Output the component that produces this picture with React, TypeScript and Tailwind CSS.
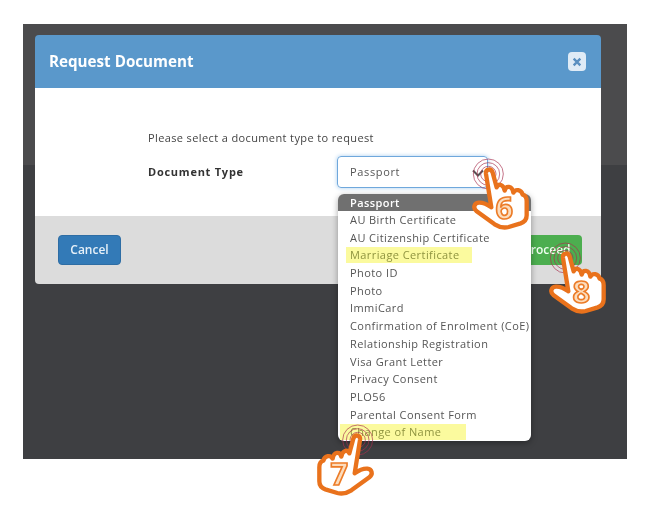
const options = [
  "AU Birth Certificate",
  "AU Citizenship Certificate",
  "Marriage Certificate",
  "Photo ID",
  "Photo",
  "ImmiCard",
  "Confirmation of Enrolment (CoE)",
  "Relationship Registration",
  "Visa Grant Letter",
  "Privacy Consent",
  "PLO56",
  "Parental Consent Form",
  "Change of Name",
];

const highlighted = ["Marriage Certificate", "Change of Name"];

function Hand({ n, className, mirror }: { n: string; className: string; mirror?: boolean }) {
  return (
    <svg viewBox="0 0 210 240" className={"absolute w-[70px] h-[80px] overflow-visible " + className}>
      <g transform={mirror ? "translate(210 0) scale(-1 1)" : undefined}>
        <g fill="none" stroke="#a8304e" strokeWidth="2.5" opacity="0.8">
          <circle cx="85" cy="72" r="45" />
          <circle cx="85" cy="72" r="34" />
          <circle cx="85" cy="72" r="23" />
        </g>
        <path
          d="M78 72 C76 56 94 54 98 68 L110 112 C116 100 130 102 134 122 C138 106 156 106 160 128 C166 116 184 118 188 134 C196 136 200 144 200 154 L200 196 C200 208 194 216 182 220 L146 231 C130 235 118 232 104 223 L50 184 C38 174 42 160 56 158 C68 157 80 162 94 172 Z"
          fill="#ffffff"
          stroke="#e9721c"
          strokeWidth="13"
          strokeLinejoin="round"
        />
      </g>
      <text
        x={mirror ? 70 : 133}
        y="208"
        textAnchor="middle"
        fontFamily="'Open Sans', sans-serif"
        fontWeight="700"
        fontSize="92"
        fill="#fcdcbc"
        stroke="#ec7c28"
        strokeWidth="5"
      >
        {n}
      </text>
    </svg>
  );
}

export default function App() {
  return (
    <div className="w-[670px] h-[513px] bg-white pt-[24px] pl-[23px] overflow-hidden font-['Open_Sans',sans-serif] blur-[0.5px]">
      <div className="relative w-[604px] h-[435px] p-[11px_12px] bg-[linear-gradient(#4b4b4d_0,#4b4b4d_141px,#3e3f42_141px)]">
        <div className="w-[566px] h-[249px] rounded-[4px] overflow-hidden flex flex-col">
          <div className="h-[53px] bg-[#5a98cb] flex items-center justify-between pl-[14px] pr-[15px]">
            <h1 className="text-[15.2px] font-bold text-white">Request Document</h1>
            <button className="w-[18px] h-[19px] rounded-[4px] bg-[#dfebf6] flex items-center justify-center">
              <svg viewBox="0 0 12 12" className="w-[10px] h-[10px]">
                <path d="M2 2 L10 10 M10 2 L2 10" stroke="#5a8fc0" strokeWidth="2.8" />
              </svg>
            </button>
          </div>
          <div className="h-[128px] bg-white pl-[113px] pt-[41px]">
            <p className="text-[11px] leading-[18px] tracking-[0.38px] text-[#444]">
              Please select a document type to request
            </p>
            <div className="flex items-center mt-[9px]">
              <span className="w-[189px] text-[11px] font-bold tracking-[0.75px] text-[#333]">Document Type</span>
              <div className="w-[151px] h-[32px] rounded-[4px] border border-[#6fa8dc] shadow-[0_0_4px_#a9cdee] flex items-center pl-[12px] text-[11px] tracking-[0.65px] text-[#555]">
                Passport
              </div>
            </div>
          </div>
          <div className="h-[68px] bg-[#dcdcdc] flex items-center justify-between pl-[23px] pr-[19px]">
            <button className="w-[63px] h-[30px] rounded-[4px] bg-[#337ab7] border border-[#2e6da4] text-[12px] font-semibold text-[#e6f0f8]">
              Cancel
            </button>
            <button className="w-[70px] h-[30px] rounded-[4px] bg-[#4cae4f] text-[12px] font-semibold text-[#f0fff0]">
              Proceed
            </button>
          </div>
        </div>

        <div className="absolute left-[315px] top-[170px] w-[193px] h-[247px] bg-white rounded-[6px] overflow-hidden shadow-[0_2px_6px_rgba(0,0,0,0.35)] text-[11px] tracking-[0.42px] text-[#555]">
          <div className="h-[17px] leading-[17px] bg-[#707070] pl-[12px] font-semibold text-white">Passport</div>
          {options.map((o) => (
            <div key={o} className="relative h-[17.7px] leading-[17.7px] pl-[12px] whitespace-nowrap">
              {highlighted.includes(o) && (
                <span
                  className={
                    "absolute top-[0.5px] h-[16px] w-[126px] bg-[#fbfa9e] " +
                    (o === "Change of Name" ? "left-[2px]" : "left-[8px]")
                  }
                />
              )}
              <span className={"relative " + (highlighted.includes(o) ? "text-[#8f9440]" : "")}>{o}</span>
            </div>
          ))}
        </div>

        <svg viewBox="0 0 12 8" className="absolute left-[449px] top-[145px] w-[12px] h-[8px]">
          <path d="M1 1.5 L6 6.5 L11 1.5" fill="none" stroke="#555" strokeWidth="2" />
        </svg>

        <Hand n="6" className="left-[437px] top-[126px]" />
        <Hand n="8" className="left-[514px] top-[210px]" />
        <Hand n="7" mirror className="left-[293px] top-[392px]" />
      </div>
    </div>
  );
}
